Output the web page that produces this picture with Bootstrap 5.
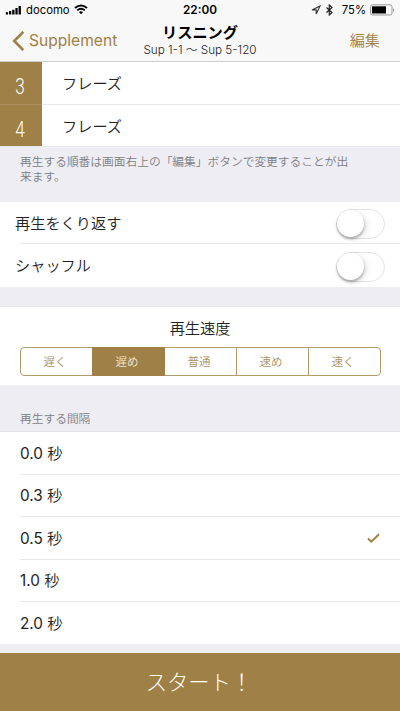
<!DOCTYPE html>
<html lang="ja">
<head>
<meta charset="utf-8">
<meta name="viewport" content="width=device-width, initial-scale=1">
<title>リスニング</title>
<link rel="stylesheet" href="https://cdn.jsdelivr.net/npm/bootstrap@5.3.0/dist/css/bootstrap.min.css">
<style>
:root{--gold:#9f8046;--line:#e9e9eb;--ground:#eeedf3}
body{font-family:Inter,"Noto Sans CJK JP",sans-serif;color:#222;background:var(--ground);font-size:15.2px;font-weight:350;line-height:1.2;height:711px;overflow:hidden}
.topbar{height:62px;background:#f8f8f8;border-bottom:1px solid #cfcfd1;color:#000}
.status{height:20px;font-size:11.3px;font-weight:400;display:grid;grid-template-columns:minmax(0,1fr) auto minmax(0,1fr);padding:0 5px}
.carrier{padding-top:1px}
.clock{font-size:11.8px;font-weight:600;padding-top:1px}
.percent{padding-top:1px}
.titles{height:41px;display:grid;grid-template-columns:minmax(0,1fr) auto minmax(0,1fr);padding-top:1px}
.gold{color:var(--gold)}
.back{font-size:15.6px;font-weight:400;padding-left:12px}
.back span{padding-top:1px}
.edit{padding:1px 20px 0 0}
.headline{font-size:15.2px;font-weight:700;line-height:17px}
.range{font-size:11.7px;line-height:18px;color:#222;white-space:nowrap}
.line-item{height:42.4px}
.order-item{height:42.5px;border-bottom:1px solid var(--line)}
.order-no{width:42px;background:var(--gold);color:#fff;font-family:Roboto,sans-serif;font-weight:300;font-size:22px;padding:9px 1px 0 0;box-shadow:0 1px #ad925f}
.order-item:last-child .order-no{box-shadow:none}
.order-no span{transform:scaleX(.78)}
.order-name{padding:3px 0 0 20px}
.note{height:55px;padding:7.5px 20px;font-size:11.73px;line-height:15.8px;color:#7d7d82}
.setting{padding-left:15px;padding-right:15px}
.setting>span{padding-top:1px}
.inset-line{background:linear-gradient(var(--line),var(--line)) 20px 100%/100% 1px no-repeat}
.toggle{width:49px;height:30px;border:1.5px solid #e3e3e3;border-radius:15px;margin-top:2px}
.knob{width:27px;height:27px;border-radius:50%;background:#fff;box-shadow:0 2px 3px rgba(0,0,0,.3),3px 2px 6px rgba(0,0,0,.1)}
.spacer{height:19.7px}
.speed{height:79px;border-top:1px solid var(--line);padding:12.5px 19.5px 0}
.speed-name{height:19px}
.speed .btn{--bs-btn-color:#ad925f;--bs-btn-border-color:#b59b6b;--bs-btn-active-bg:#9f8046;--bs-btn-active-border-color:#9f8046;--bs-btn-active-color:#eee6d6;font-size:11.5px;font-weight:350;line-height:17px;height:29px;padding:4px 2px 2px 0;border-radius:4px;width:20%}
.group-title{height:47px;padding:26.5px 20px 0;font-size:11.73px;line-height:14px;color:#7d7d82;border-bottom:1px solid #e3e2e8}
.gap-list .line-item{padding:1px 20px 0;font-size:15.3px}
.gap-list span{font-weight:400}
.gap-list small{font-size:1em;font-weight:350}
.start{height:58px;background:var(--gold);color:#fff;border:0;border-radius:0;font-size:21.3px;font-weight:300;padding:1px 2px 0 0}
</style>
</head>
<body>
<header class="topbar">
  <div class="status align-items-center">
    <div class="d-flex align-items-center">
      <svg width="17" height="10" viewBox="0 0 17 10"><path d="M.8 7.200h2.300v2.300H.8zM4 6h2.300v3.500H4zM7.200 4.800h2.300v4.700H7.200zM10.400 3h2.300v6.500h-2.300zM13.600 1h2.300v8.500h-2.300z"/></svg>
      <span class="carrier ps-1">docomo</span>
      <svg class="ms-1" width="14" height="11" viewBox="0 0 14 11" fill="none" stroke="#000" stroke-width="1.900"><path d="M1 4Q7-1.200 13 4M3.200 6.400Q7 3 10.800 6.400"/><path d="M4.900 8Q7 6.300 9.100 8L7 10.300z" fill="#000" stroke="none"/></svg>
    </div>
    <div class="clock">22:00</div>
    <div class="d-flex align-items-center justify-content-end">
      <svg class="me-1" width="10" height="10" viewBox="0 0 10 10" fill="none" stroke="#333" stroke-width="1.100"><path d="M1 4.900 9 1 5.200 9V4.900z"/></svg>
      <svg class="me-1" width="9" height="12" viewBox="0 0 9 12" fill="none" stroke="#222" stroke-width="1.200"><path d="m1.500 3.500 5.500 5-2.700 2.500V1L7 3.500l-5.500 5"/></svg>
      <span class="percent mx-1">75%</span>
      <svg width="25" height="12" viewBox="0 0 25 12"><rect x=".5" y=".8" width="21.500" height="10.200" rx="2" fill="none" stroke="#999"/><path d="M2 2.300h14v7.200H2z"/><path d="M23.200 4q2 2 0 4z" fill="#888"/></svg>
    </div>
  </div>
  <div class="titles align-items-center">
    <a class="back gold text-decoration-none d-flex align-items-center" href="#"><svg width="13" height="20" viewBox="0 0 13 20" fill="none" stroke="currentColor" stroke-width="2.600"><path d="M11.300.8 2.200 10l9.100 9.200"/></svg><span class="ms-1">Supplement</span></a>
    <div class="text-center"><div class="headline">リスニング</div><div class="range">Sup 1-1 〜 Sup 5-120</div></div>
    <a class="edit gold text-end text-decoration-none" href="#">編集</a>
  </div>
</header>
<main>
  <section class="bg-white">
    <div class="order-item d-flex"><div class="order-no d-flex align-items-center justify-content-center"><span>3</span></div><div class="order-name d-flex align-items-center">フレーズ</div></div>
    <div class="order-item d-flex"><div class="order-no d-flex align-items-center justify-content-center"><span>4</span></div><div class="order-name d-flex align-items-center">フレーズ</div></div>
  </section>
  <div class="note">再生する順番は画面右上の「編集」ボタンで変更することが出<br>来ます。</div>
  <section class="bg-white">
    <div class="line-item setting inset-line d-flex align-items-center justify-content-between"><span>再生をくり返す</span><div class="toggle" role="switch" aria-checked="false"><div class="knob"></div></div></div>
    <div class="line-item setting d-flex align-items-center justify-content-between"><span>シャッフル</span><div class="toggle" role="switch" aria-checked="false"><div class="knob"></div></div></div>
  </section>
  <div class="spacer"></div>
  <section class="speed bg-white text-center">
    <div class="speed-name">再生速度</div>
    <div class="btn-group d-flex mt-2" role="group"><button class="btn">遅く</button><button class="btn active">遅め</button><button class="btn">普通</button><button class="btn">速め</button><button class="btn">速く</button></div>
  </section>
  <div class="group-title">再生する間隔</div>
  <section class="gap-list bg-white">
    <div class="line-item inset-line d-flex align-items-center"><span>0.0 <small>秒</small></span></div>
    <div class="line-item inset-line d-flex align-items-center"><span>0.3 <small>秒</small></span></div>
    <div class="line-item inset-line d-flex align-items-center justify-content-between"><span>0.5 <small>秒</small></span><svg width="13" height="11" viewBox="0 0 13 11" fill="none" stroke="#9f8046" stroke-width="2"><path d="m1 5.500 3.300 3.200L12 1.200"/></svg></div>
    <div class="line-item inset-line d-flex align-items-center"><span>1.0 <small>秒</small></span></div>
    <div class="line-item d-flex align-items-center"><span>2.0 <small>秒</small></span></div>
  </section>
</main>
<footer class="fixed-bottom"><button class="start btn w-100 d-block">スタート！</button></footer>
<script src="https://cdn.jsdelivr.net/npm/bootstrap@5.3.0/dist/js/bootstrap.bundle.min.js"></script>
</body>
</html>
